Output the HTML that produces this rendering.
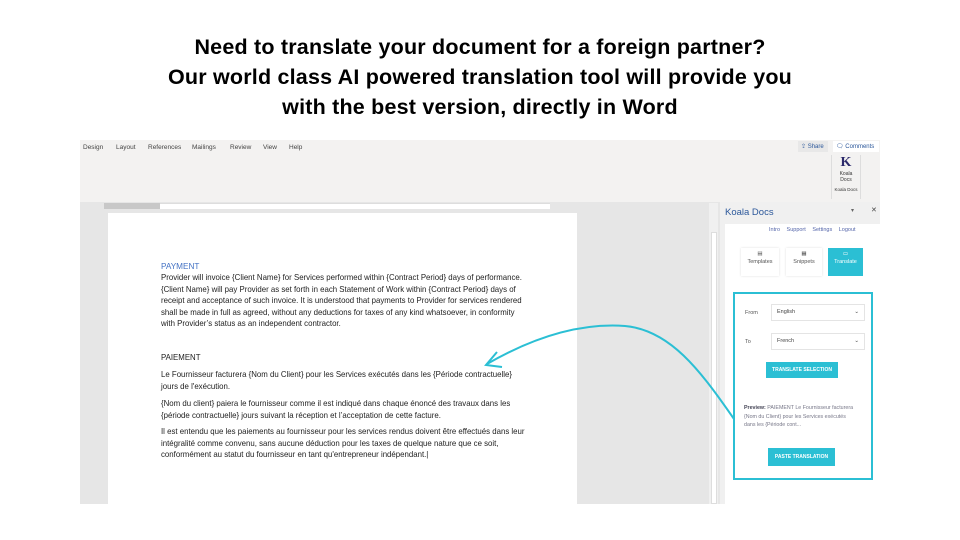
<!DOCTYPE html>
<html><head><meta charset="utf-8"><style>
*{margin:0;padding:0;box-sizing:border-box}
body{width:960px;height:540px;background:#fff;position:relative;overflow:hidden;font-family:"Liberation Sans",sans-serif}
.t{position:absolute;left:0;width:960px;text-align:center;font-weight:bold;font-size:21.5px;letter-spacing:0.2px;color:#000;line-height:30px;top:32px}
.abs{position:absolute}
.menu span{position:absolute;top:144px;font-size:6.5px;color:#444}
.doc{position:absolute;left:161px;font-size:7.85px;color:#222;line-height:11.6px;white-space:nowrap}
.btn{position:absolute;background:#2bbfd4;color:#fff;font-size:5px;font-weight:bold;text-align:center;white-space:nowrap}
.lbl{position:absolute;font-size:5.5px;color:#555}
.sel{position:absolute;border:1px solid #e4e4e4;background:#fff;font-size:5.5px;color:#444;padding:4px 5px;height:17px}
</style></head><body>
<div class="t">Need to translate your document for a foreign partner?<br>Our world class AI powered translation tool will provide you<br>with the best version, directly in Word</div>

<div class="abs" style="left:80px;top:140px;width:800px;height:62px;background:#f3f2f1"></div>
<div class="menu"><span style="left:83px">Design</span><span style="left:116px">Layout</span><span style="left:148px">References</span><span style="left:192px">Mailings</span><span style="left:230px">Review</span><span style="left:263px">View</span><span style="left:289px">Help</span></div>
<div class="abs" style="left:798px;top:141px;width:30px;height:11px;background:#e8e8e8;font-size:6px;color:#2b579a;padding:2px 3px;white-space:nowrap">⇪ Share</div>
<div class="abs" style="left:833px;top:141px;width:46px;height:11px;background:#fff;font-size:6px;color:#2b579a;padding:2px 3px;white-space:nowrap">🗨 Comments</div>
<div class="abs" style="left:831px;top:155px;width:30px;height:44px;border-left:1px solid #ddd;border-right:1px solid #ddd;text-align:center;font-size:5px;color:#333;line-height:6px"><div style="font-size:14px;color:#2c2a6b;font-weight:bold;line-height:16px;font-family:'Liberation Serif',serif">K</div>Koala<br>Docs<div style="margin-top:4px;font-size:4.5px">Koala Docs</div></div>

<div class="abs" style="left:80px;top:202px;width:640px;height:302px;background:#e6e6e6"></div>
<div class="abs" style="left:104px;top:203px;width:446px;height:6px;background:#fff;border-top:1px solid #ddd"></div>
<div class="abs" style="left:104px;top:203px;width:56px;height:6px;background:#c8c8c8"></div>
<div class="abs" style="left:108px;top:213px;width:469px;height:291px;background:#fff"></div>
<div class="abs" style="left:709px;top:203px;width:9px;height:301px;background:#f0f0f0"></div>
<div class="abs" style="left:711px;top:232px;width:6px;height:272px;background:#fff;border:1px solid #ddd"></div>

<div class="doc" style="top:261px;color:#4472c4;font-size:8.2px">PAYMENT</div>
<div class="doc" style="top:272px">Provider will invoice {Client Name} for Services performed within {Contract Period} days of performance.<br>{Client Name} will pay Provider as set forth in each Statement of Work within {Contract Period} days of<br>receipt and acceptance of such invoice. It is understood that payments to Provider for services rendered<br>shall be made in full as agreed, without any deductions for taxes of any kind whatsoever, in conformity<br>with Provider’s status as an independent contractor.</div>
<div class="doc" style="top:352px">PAIEMENT</div>
<div class="doc" style="top:369px">Le Fournisseur facturera {Nom du Client} pour les Services exécutés dans les {Période contractuelle}<br>jours de l'exécution.</div>
<div class="doc" style="top:398px">{Nom du client} paiera le fournisseur comme il est indiqué dans chaque énoncé des travaux dans les<br>{période contractuelle} jours suivant la réception et l’acceptation de cette facture.</div>
<div class="doc" style="top:426px">Il est entendu que les paiements au fournisseur pour les services rendus doivent être effectués dans leur<br>intégralité comme convenu, sans aucune déduction pour les taxes de quelque nature que ce soit,<br>conformément au statut du fournisseur en tant qu'entrepreneur indépendant.|</div>

<div class="abs" style="left:720px;top:202px;width:160px;height:302px;background:#f0f0f0"></div>
<div class="abs" style="left:725px;top:207px;font-size:9.5px;color:#2b579a">Koala Docs</div>
<div class="abs" style="left:851px;top:207px;font-size:6px;color:#666">▾</div>
<div class="abs" style="left:871px;top:206px;font-size:7px;color:#444">✕</div>
<div class="abs" style="left:725px;top:224px;width:155px;height:280px;background:#fff"></div>
<div class="abs" style="left:769px;top:227px;font-size:5.5px;color:#5566aa;word-spacing:5px">Intro Support Settings Logout</div>
<div class="abs" style="left:741px;top:248px;width:38px;height:28px;box-shadow:0 0 2px #ddd;font-size:5.5px;color:#555;text-align:center;padding-top:3px">▤<br><span style="line-height:10px">Templates</span></div>
<div class="abs" style="left:786px;top:248px;width:36px;height:28px;box-shadow:0 0 2px #ddd;font-size:5.5px;color:#555;text-align:center;padding-top:3px">▦<br><span style="line-height:10px">Snippets</span></div>
<div class="abs" style="left:828px;top:248px;width:35px;height:28px;background:#2bbfd4;font-size:5.5px;color:#fff;text-align:center;padding-top:3px">▭<br><span style="line-height:10px">Translate</span></div>

<div class="abs" style="left:733px;top:292px;width:140px;height:188px;border:2px solid #2bbfd4"></div>
<div class="lbl" style="left:745px;top:310px">From</div>
<div class="sel" style="left:771px;top:304px;width:94px">English<span style="float:right">⌄</span></div>
<div class="lbl" style="left:745px;top:339px">To</div>
<div class="sel" style="left:771px;top:333px;width:94px">French<span style="float:right">⌄</span></div>
<div class="btn" style="left:766px;top:362px;width:72px;height:16px;line-height:16px">TRANSLATE SELECTION</div>
<div class="abs" style="left:744px;top:404px;width:110px;font-size:5.3px;line-height:8.5px;color:#778"><b style="color:#445">Preview:</b> PAIEMENT Le Fournisseur facturera {Nom du Client} pour les Services exécutés dans les {Période cont...</div>
<div class="btn" style="left:768px;top:448px;width:67px;height:18px;line-height:18px">PASTE TRANSLATION</div>

<svg class="abs" style="left:0;top:0" width="960" height="540"><path d="M734 419 C700 370,670 330,625 326 C570 322,520 345,487 364" fill="none" stroke="#2bbfd4" stroke-width="2"/><path d="M497 352 L486 365 L502 367" fill="none" stroke="#2bbfd4" stroke-width="2"/></svg>
</body></html>
